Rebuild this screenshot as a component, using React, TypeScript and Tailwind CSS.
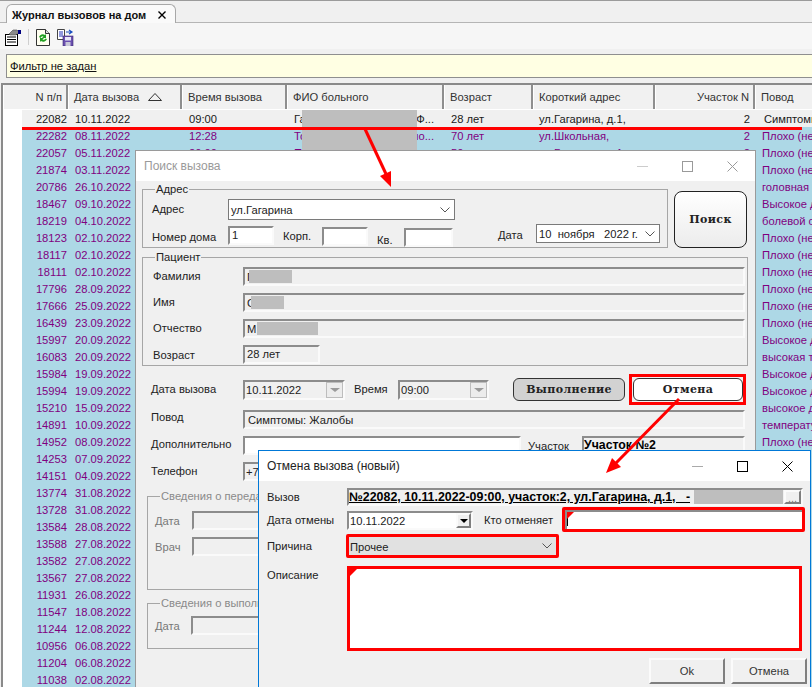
import type { ReactNode } from 'react';

const SUNKEN = 'border-2 border-t-[#8c8c8c] border-l-[#8c8c8c] border-r-[#fafafa] border-b-[#fafafa]';
const RAISED = 'border-2 border-t-[#fbfbfb] border-l-[#fbfbfb] border-r-[#7f7f7f] border-b-[#7f7f7f] bg-[#f0f0f0]';
const SERIF_BTN = "font-['DejaVu_Serif',serif] font-bold text-[11px] tracking-[0.4px] text-[#222]";

const REASON = 'Плохо (недомогание)';

const rows: [string, string, string?, string?, string?, string?, string?, string?][] = [
  ['22082', '10.11.2022', '09:00', 'Га|Ф...', '28 лет', 'ул.Гагарина, д.1,', '2', 'Симптомы: Жалобы'],
  ['22282', '08.11.2022', '12:28', 'То|но...', '70 лет', 'ул.Школьная,', '2', REASON],
  ['22057', '05.11.2022', '20:00', 'П|', '50 лет', 'ул.Гагарина, д.1', '2', REASON],
  ['21874', '03.11.2022', '', '', '', '', '', REASON],
  ['20786', '26.10.2022', '', '', '', '', '', 'головная боль'],
  ['18467', '09.10.2022', '', '', '', '', '', 'Высокое давление'],
  ['18219', '04.10.2022', '', '', '', '', '', 'болевой синдром'],
  ['18123', '02.10.2022', '', '', '', '', '', REASON],
  ['18117', '02.10.2022', '', '', '', '', '', REASON],
  ['18111', '02.10.2022', '', '', '', '', '', REASON],
  ['17796', '28.09.2022', '', '', '', '', '', REASON],
  ['17666', '25.09.2022', '', '', '', '', '', REASON],
  ['16439', '23.09.2022', '', '', '', '', '', REASON],
  ['15997', '20.09.2022', '', '', '', '', '', 'Высокое давление'],
  ['16083', '20.09.2022', '', '', '', '', '', 'высокая температура'],
  ['15984', '19.09.2022', '', '', '', '', '', 'Высокое давление'],
  ['15994', '19.09.2022', '', '', '', '', '', 'Высокое давление'],
  ['15210', '15.09.2022', '', '', '', '', '', 'высокое давление'],
  ['14891', '10.09.2022', '', '', '', '', '', 'температура'],
  ['14952', '08.09.2022', '', '', '', '', '', REASON],
  ['14253', '07.09.2022'],
  ['14151', '04.09.2022'],
  ['13774', '31.08.2022'],
  ['13728', '31.08.2022'],
  ['13584', '28.08.2022'],
  ['13588', '27.08.2022'],
  ['13582', '27.08.2022'],
  ['13567', '27.08.2022'],
  ['11931', '26.08.2022'],
  ['11547', '18.08.2022'],
  ['11244', '12.08.2022'],
  ['10956', '06.08.2022'],
  ['11204', '06.08.2022'],
  ['11038', '02.08.2022'],
];

function ToolIcons() {
  return (
    <div className="flex items-center h-[22px] pl-[5px]">
      <svg width="17" height="17" viewBox="0 0 17 17">
        <rect x="0.5" y="5.5" width="12" height="11" fill="#fff" stroke="#000" />
        <path d="M2 8h9M2 10.5h9M2 13h9" stroke="#000" strokeWidth="1" />
        <path d="M4 5l4-4h4l2 2-3 3H5z" fill="#8a8a8a" stroke="#444" strokeWidth="0.6" />
        <rect x="13" y="1" width="3" height="4" fill="#000080" />
      </svg>
      <div className="w-px h-[16px] bg-[#cfcfcf] ml-[6px] mr-[7px]" />
      <svg width="14" height="17" viewBox="0 0 14 17">
        <path d="M0.5 0.5h9l4 4v12h-13z" fill="#fffff0" stroke="#333" />
        <path d="M9.5 0.5v4h4" fill="#ddd" stroke="#333" />
        <path d="M3 8a4 4 0 0 1 6-2l1-1v4H6l1.500-1.500A2.500 2.500 0 0 0 4.500 9z" fill="#22a022" />
        <path d="M11 10a4 4 0 0 1-6 2l-1 1V9h4l-1.500 1.500a2.500 2.500 0 0 0 3 -1z" fill="#22a022" />
      </svg>
      <svg width="17" height="17" viewBox="0 0 17 17" className="ml-[7px]">
        <path d="M0.5 0.500h7v10h-7z" fill="#fff" stroke="#444" />
        <path d="M2 3h4M2 5h4M2 7h4" stroke="#2233bb" />
        <path d="M9 3h5M12 1l3 2-3 2" fill="none" stroke="#1a4fc0" strokeWidth="1.200" />
        <rect x="6" y="7" width="10" height="10" fill="#6a4fb0" stroke="#3a2a70" strokeWidth="0.6" />
        <rect x="8" y="8" width="6" height="3.500" fill="#e8e8f8" />
        <rect x="8.500" y="13" width="5" height="4" fill="#c8c8d8" />
      </svg>
    </div>
  );
}

function HeaderCell({ w, right, children }: { w: string; right?: boolean; children?: ReactNode }) {
  return (
    <div
      className={`${w} shrink-0 h-full flex items-center bg-[#f1f1f1] border-l border-l-white border-r-2 border-r-[#8f8f8f] text-[#333] ${right ? 'justify-end pr-[4px]' : 'pl-[5px]'}`}
    >
      {children}
    </div>
  );
}

function JournalGrid() {
  return (
    <div className="ml-[1px] border-l-2 border-t-2 border-[#8a8a8a] bg-white overflow-hidden flex-1">
      <div className="flex h-[24px]">
        <HeaderCell w="w-[65px]" right>N п/п</HeaderCell>
        <HeaderCell w="w-[114px]">
          <span>Дата вызова</span>
          <svg width="14" height="8" viewBox="0 0 14 8" className="ml-[9px]">
            <path d="M7 0.500L13.500 7.500H0.500z" fill="none" stroke="#333" />
          </svg>
        </HeaderCell>
        <HeaderCell w="w-[105px]">Время вызова</HeaderCell>
        <HeaderCell w="w-[157px]">ФИО больного</HeaderCell>
        <HeaderCell w="w-[89px]">Возраст</HeaderCell>
        <HeaderCell w="w-[122px]">Короткий адрес</HeaderCell>
        <HeaderCell w="w-[100px]" right>Участок N</HeaderCell>
        <HeaderCell w="w-[60px]">Повод</HeaderCell>
      </div>
      <div className="pt-[1px] pl-[19px]">
        {rows.map((r, i) => (
          <div
            key={r[0] + i}
            className={`flex h-[17px] leading-[19px] whitespace-nowrap ${i === 0 ? 'bg-[#f0f0f0] text-[#1a1a1a]' : 'bg-[#add8e6] text-[#800080]'}`}
          >
            <div className="w-[45px] text-right shrink-0">{r[0]}</div>
            <div className="w-[115px] pl-[8px] shrink-0">{r[1]}</div>
            <div className="w-[105px] pl-[7px] shrink-0">{r[2]}</div>
            <div className="w-[157px] pl-[7px] pr-[10px] flex justify-between shrink-0">
              <span>{r[3]?.split('|')[0]}</span>
              <span>{r[3]?.split('|')[1]}</span>
            </div>
            <div className="w-[89px] pl-[7px] shrink-0">{r[4]}</div>
            <div className="w-[122px] pl-[6px] shrink-0">{r[5]}</div>
            <div className="w-[100px] pr-[5px] text-right shrink-0">{r[6]}</div>
            <div className={`w-[60px] shrink-0 overflow-hidden ${i === 0 ? 'pl-[9px]' : 'pl-[7px]'}`}>{r[7]}</div>
          </div>
        ))}
      </div>
    </div>
  );
}

function WindowButtons({ dark }: { dark?: boolean }) {
  const c = dark ? '#000' : '#9a9a9a';
  return (
    <div className="flex">
      <div className="w-[45px] flex items-center justify-center">
        <svg width="11" height="11" viewBox="0 0 11 11"><path d="M0 5.500h11" stroke={dark ? '#aaa' : '#ccc'} /></svg>
      </div>
      <div className="w-[45px] flex items-center justify-center">
        <svg width="11" height="11" viewBox="0 0 11 11"><rect x="0.500" y="0.500" width="10" height="10" fill="none" stroke={c} /></svg>
      </div>
      <div className="w-[45px] flex items-center justify-center">
        <svg width="11" height="11" viewBox="0 0 11 11"><path d="M0.500 0.500l10 10M10.500 0.500l-10 10" stroke={c} /></svg>
      </div>
    </div>
  );
}

function GroupBox({ title, className, gray, children }: { title: string; className: string; gray?: boolean; children: ReactNode }) {
  return (
    <div className={`relative border border-[#a6a6a6] ${className}`}>
      <span className={`absolute left-[12px] -top-[8px] px-[1px] bg-[#f0f0f0] leading-[14px] ${gray ? 'text-[#8a8a8a]' : 'text-[#222]'}`}>
        {title}
      </span>
      {children}
    </div>
  );
}

function Chevron({ className }: { className?: string }) {
  return (
    <svg width="10" height="6" viewBox="0 0 10 6" className={className}>
      <path d="M0.500 0.500L5 5l4.500-4.500" fill="none" stroke="#555" />
    </svg>
  );
}

function GrayArrow() {
  return (
    <div className="ml-auto w-[17px] h-full bg-[#ececec] border border-[#bdbdbd] flex items-center justify-center">
      <div className="w-0 h-0 border-x-[5px] border-x-transparent border-t-[4px] border-t-[#9a9a9a]" />
    </div>
  );
}

function Flag() {
  return (
    <svg width="7" height="7" viewBox="0 0 7 7" className="absolute left-0 top-0">
      <polygon points="0,0 7,0 0,7" fill="#ff0000" />
    </svg>
  );
}

function SearchDialog() {
  return (
    <div className="absolute left-[135px] top-[150px] w-[621px] h-[540px] border border-[#9a9a9a] bg-[#f0f0f0] text-[#222]">
      <div className="h-[30px] bg-white flex items-center justify-between pl-[8px] text-[12px]">
        <span className="text-[#9a9a9a]">Поиск вызова</span>
        <WindowButtons />
      </div>

      <div className="flex items-start pl-[6px] pt-[8px]">
        <GroupBox title="Адрес" className="w-[526px] h-[59px] pl-[9px] pt-[9px]">
          <div className="flex items-center h-[21px]">
            <span className="w-[76px] -mt-[1px]">Адрес</span>
            <div className="w-[227px] h-[21px] bg-white border border-[#7a7a7a] flex items-center justify-between pl-[2px] pr-[4px]">
              <span>ул.Гагарина</span>
              <Chevron />
            </div>
          </div>
          <div className="flex items-start mt-[4px] h-[22px]">
            <span className="w-[76px] mt-[6px]">Номер дома</span>
            <div className={`w-[46px] h-[19px] mt-[2px] bg-white pl-[2px] leading-[14px] ${SUNKEN}`}>1</div>
            <span className="w-[39px] ml-[9px] mt-[5px]">Корп.</span>
            <div className={`w-[46px] h-[19px] mt-[3px] bg-white ${SUNKEN}`} />
            <span className="w-[27px] ml-[9px] mt-[9px]">Кв.</span>
            <div className={`w-[49px] h-[19px] mt-[4px] bg-white ${SUNKEN}`} />
            <span className="w-[38px] ml-[45px] mt-[4px]">Дата</span>
            <div className="w-[124px] h-[19px] bg-white border border-[#7a7a7a] flex items-center justify-between pl-[2px] pr-[4px] whitespace-pre">
              <span>10  ноября   2022 г.</span>
              <Chevron />
            </div>
          </div>
        </GroupBox>
        <button className={`w-[73px] h-[57px] ml-[6px] mt-[2px] rounded-[8px] border border-[#222] bg-gradient-to-b from-white to-[#ececec] ${SERIF_BTN}`}>
          Поиск
        </button>
      </div>

      <GroupBox title="Пациент" className="w-[606px] h-[109px] ml-[6px] mt-[9px] pl-[10px] pt-[9px]">
        {[
          ['Фамилия', 'w-[2px]', 'w-[43px]', 'Г'],
          ['Имя', 'w-[4px]', 'w-[33px]', 'С'],
          ['Отчество', 'w-[10px]', 'w-[61px]', 'М'],
        ].map(([label, first, blur, ch]) => (
          <div key={label} className="flex items-center h-[19px] mb-[7px]">
            <span className="w-[90px] -mt-[2px]">{label}</span>
            <div className={`w-[502px] h-[19px] pl-[2px] flex items-center overflow-hidden ${SUNKEN}`}>
              <span className={`${first} overflow-hidden`}>{ch}</span>
              <div className={`${blur} h-[13px] bg-[#bebebe]`} />
            </div>
          </div>
        ))}
        <div className="flex items-center h-[19px]">
          <span className="w-[90px] mt-[1px]">Возраст</span>
          <div className={`w-[77px] h-[19px] pl-[2px] leading-[14px] ${SUNKEN}`}>28 лет</div>
        </div>
      </GroupBox>

      <div className="flex items-center h-[23px] ml-[15px] mt-[12px]">
        <span className="w-[92px] -mt-[2px]">Дата вызова</span>
        <div className={`w-[102px] h-[20px] pl-[1px] flex items-center ${SUNKEN}`}>
          <span>10.11.2022</span>
          <GrayArrow />
        </div>
        <span className="w-[44px] ml-[9px] -mt-[2px]">Время</span>
        <div className={`w-[91px] h-[20px] pl-[1px] flex items-center ${SUNKEN}`}>
          <span>09:00</span>
          <GrayArrow />
        </div>
        <button className={`w-[112px] h-[23px] ml-[24px] rounded-[6px] border border-[#333] bg-[#d2d2d2] ${SERIF_BTN}`}>
          Выполнение
        </button>
        <div className="relative ml-[8px]">
          <button className={`block w-[110px] h-[23px] rounded-[6px] border border-[#333] bg-white ${SERIF_BTN}`}>Отмена</button>
          <div className="absolute -left-[4px] -right-[3px] -top-[4px] -bottom-[4px] border-[3px] border-[#ff0000]" />
        </div>
      </div>

      <div className="flex items-center h-[19px] ml-[15px] mt-[9px]">
        <span className="w-[92px] -mt-[6px]">Повод</span>
        <div className={`w-[502px] h-[19px] pl-[3px] flex items-center ${SUNKEN}`}>Симптомы: Жалобы</div>
      </div>
      <div className="flex items-start h-[19px] ml-[15px] mt-[7px]">
        <span className="w-[92px] mt-[1px]">Дополнительно</span>
        <div className={`w-[278px] h-[19px] bg-white ${SUNKEN}`} />
        <span className="w-[54px] ml-[7px] mt-[3px]">Участок</span>
        <div className={`w-[163px] h-[17px] flex items-center font-bold underline text-[12.3px] text-black ${SUNKEN}`}>
          Участок №2
        </div>
      </div>
      <div className="flex items-center h-[19px] ml-[15px] mt-[7px]">
        <span className="w-[92px] -mt-[2px]">Телефон</span>
        <div className={`w-[502px] h-[19px] pl-[1px] flex items-center ${SUNKEN}`}>+7</div>
      </div>

      <GroupBox gray title="Сведения о передаче" className="w-[600px] h-[94px] ml-[11px] mt-[15px] pl-[7px] pt-[14px] text-[#777]">
        <div className="flex items-center h-[19px]">
          <span className="w-[37px]">Дата</span>
          <div className={`w-[300px] h-[19px] ${SUNKEN}`} />
        </div>
        <div className="flex items-center h-[19px] mt-[7px]">
          <span className="w-[37px]">Врач</span>
          <div className={`w-[300px] h-[19px] ${SUNKEN}`} />
        </div>
      </GroupBox>
      <GroupBox gray title="Сведения о выполнении" className="w-[600px] h-[46px] ml-[11px] mt-[13px] pl-[7px] pt-[12px] text-[#777]">
        <div className="flex items-center h-[19px]">
          <span className="w-[36px]">Дата</span>
          <div className={`w-[300px] h-[19px] ${SUNKEN}`} />
        </div>
      </GroupBox>
    </div>
  );
}

function CancelDialog() {
  return (
    <div className="absolute left-[258px] top-[450px] w-[553px] h-[240px] border border-[#0078d7] bg-[#f0f0f0] text-[#222]">
      <div className="h-[30px] bg-white flex items-center justify-between pl-[8px] text-[12px]">
        <span>Отмена вызова (новый)</span>
        <WindowButtons dark />
      </div>

      <div className="flex items-center h-[18px] ml-[8px] mt-[7px]">
        <span className="w-[80px]">Вызов</span>
        <div className={`relative w-[456px] h-[18px] flex items-center overflow-hidden whitespace-pre font-bold underline text-[12.4px] text-black ${SUNKEN}`}>
          №22082, 10.11.2022-09:00, участок:2, ул.Гагарина, д.1,   -
          <div className="absolute left-[345px] top-0 w-[89px] h-full bg-[#bebebe]" />
          <div className={`absolute right-0 top-0 w-[17px] h-full text-[#777] text-[11px] font-normal no-underline text-center leading-[12px] ${RAISED} border`}>...</div>
        </div>
      </div>

      <div className="flex items-start h-[25px] ml-[8px] mt-[1px]">
        <span className="w-[80px] mt-[6px]">Дата отмены</span>
        <div className={`w-[126px] h-[19px] mt-[4px] pl-[1px] flex items-center bg-white ${SUNKEN}`}>
          <span>10.11.2022</span>
          <div className={`ml-auto w-[15px] h-full flex items-center justify-center ${RAISED} border`}>
            <div className="w-0 h-0 border-x-[4px] border-x-transparent border-t-[4px] border-t-black" />
          </div>
        </div>
        <span className="w-[78px] ml-[11px] mt-[6px]">Кто отменяет</span>
        <div className="w-[243px] h-[25px] border-[3px] border-[#ff0000] rounded-[2px]">
          <div className={`relative w-full h-full bg-white border-b-0 border-r-0 ${SUNKEN}`}>
            <div className="absolute left-0 top-0 w-px h-[14px] bg-black" />
            <Flag />
          </div>
        </div>
      </div>

      <div className="flex items-start h-[24px] ml-[8px] mt-[2px]">
        <span className="w-[79px] mt-[5px]">Причина</span>
        <div className="w-[213px] h-[24px] border-[3px] border-[#ff0000] rounded-[2px] bg-[#e1e1e1] flex items-center justify-between pl-[1px] pr-[4px]">
          <span className="mt-[2px]">Прочее</span>
          <Chevron />
        </div>
      </div>

      <div className="flex items-start h-[85px] ml-[8px] mt-[8px]">
        <span className="w-[80px] mt-[2px]">Описание</span>
        <div className="relative w-[455px] h-[85px] border-[3px] border-[#ff0000] bg-white">
          <Flag />
        </div>
      </div>

      <div className="flex justify-end gap-[6px] mt-[7px] pr-[3px]">
        <button className={`w-[76px] h-[26px] text-[#333] ${RAISED}`}>Ok</button>
        <button className={`w-[76px] h-[26px] text-[#333] ${RAISED}`}>Отмена</button>
      </div>
    </div>
  );
}

export default function App() {
  return (
    <div className="bg-white h-[690px] w-[812px] overflow-hidden">
      <div className="relative h-[687px] overflow-hidden flex flex-col bg-[#f0f0f0] font-['Liberation_Sans',sans-serif] text-[11.2px] leading-[14px]">
        <div className="h-[23px] pt-[3px] pl-[6px] border-t border-[#9b9b9b] border-b border-b-[#b5b5b5] bg-[#f0f0f0]">
          <div className="w-[170px] h-[20px] rounded-t-[6px] border border-b-0 border-[#a8a8a8] bg-[#fafafa] flex items-center justify-between pl-[5px] pr-[9px]">
            <span className="font-bold text-[11px] text-[#111]">Журнал вызовов на дом</span>
            <svg width="8" height="8" viewBox="0 0 8 8"><path d="M0.500 0.500l7 7M7.500 0.500l-7 7" stroke="#000" strokeWidth="1.400" /></svg>
          </div>
        </div>
        <div className="h-[26px] pt-[3px] bg-[#f6f6f6]">
          <ToolIcons />
        </div>
        <div className="h-[5px]" />
        <div className="h-[24px] ml-[6px] border border-r-0 border-[#8f8f8f] bg-[#ffffe3] flex items-center pl-[3px]">
          <span className="underline text-[#111]">Фильтр не задан</span>
        </div>
        <div className="h-[5px]" />
        <JournalGrid />

        <div className="absolute left-[302px] top-[110px] w-[115px] h-[40px] bg-[#bebebe]" />
        <SearchDialog />
        <CancelDialog />

        <div className="absolute left-[22px] top-[127px] w-[780px] h-[3px] bg-[#ff0000]" />
        <svg width="812" height="690" className="absolute left-0 top-0 pointer-events-none">
          <path d="M365 129L386 174" stroke="#ff0000" strokeWidth="3" />
          <polygon points="391,187 380,176 391,171" fill="#ff0000" />
          <path d="M679 399L616 463" stroke="#ff0000" strokeWidth="3" />
          <polygon points="606,473 612,458 621,467" fill="#ff0000" />
        </svg>
      </div>
    </div>
  );
}
